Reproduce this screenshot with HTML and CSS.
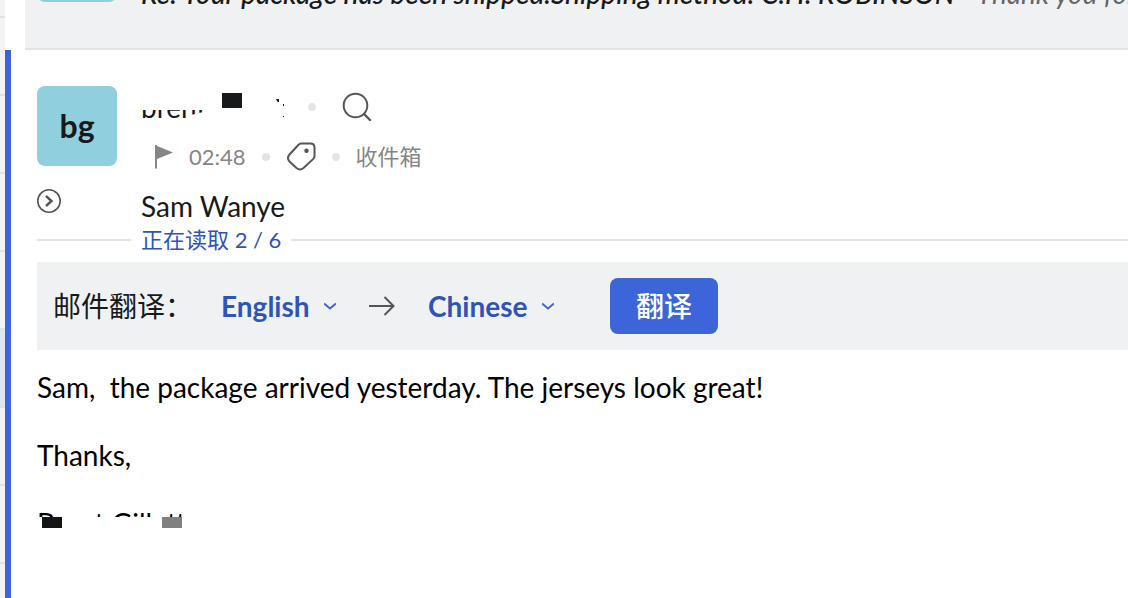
FILE: index.html
```html
<!DOCTYPE html>
<html lang="zh-CN">
<head>
  <meta charset="UTF-8">
  <meta name="viewport" content="width=device-width, initial-scale=1.0">
  <title>Mail</title>
  <link rel="stylesheet" href="styles.css">
</head>
<body>
  <div class="app">
    <aside class="mail-list">
      <div class="mail-row"></div>
      <div class="mail-row"></div>
      <div class="mail-row"></div>
      <div class="mail-row"></div>
      <div class="mail-row"></div>
      <div class="mail-row selected"></div>
      <div class="mail-row"></div>
      <div class="mail-row"></div>
      <div class="mail-row"></div>
    </aside>
    <main class="thread">
      <section class="collapsed">
        <div class="avatar"></div>
        <p class="preview">Re: Your package has been shipped.Shipping method: C.H. ROBINSON <span>- Thank you for</span></p>
      </section>

      <article class="message">
        <header class="message-header">
          <div class="avatar">bg</div>
          <div class="details">
            <div class="sender-row">
              <div class="sender">
                <span>brent gillette</span>
                <svg class="cover" width="164" height="40" viewBox="0 0 164 40">
                  <path fill="#fff" d="M0 0H164V40H46V30L62 26V24H0Z"/>
                  <rect x="81" y="7" width="20" height="15" fill="#18191a"/>
                  <path fill="#18191a" d="M135 13h3v3h-1l-1-1zM142 18h1v2h-1zM142 30h1v1h-1z"/>
                </svg>
              </div>
              <i class="dot"></i>
              <button class="icon-button search" aria-label="搜索">
                <svg width="30" height="30" viewBox="0 0 30 30" fill="none" stroke="#55555c" stroke-width="2">
                  <circle cx="13.500" cy="13.500" r="11.800"/>
                  <path d="M22 22l6 6" stroke-width="2.400" stroke-linecap="round"/>
                </svg>
              </button>
            </div>
            <div class="meta-row">
              <svg width="20" height="26" viewBox="0 0 20 26" fill="#868686">
                <path d="M2 1h2v1l16 6.500L4 15v9.500H2z"/>
              </svg>
              <time>02:48</time>
              <i class="dot"></i>
              <button class="icon-button" aria-label="标签">
                <svg width="30" height="30" viewBox="0 0 30 30" fill="none" stroke="#55555c" stroke-width="2">
                  <path d="M15 1.500h9.500q4 0 4 4V14q0 1.700-1.200 2.900L17.500 26q-3.500 3-7 0L3.500 19.500q-3-3.500 0-7L12.500 2.800q1.100-1.300 2.500-1.300z"/>
                  <circle cx="20.500" cy="8.700" r="2.200" fill="#55555c" stroke="none"/>
                </svg>
              </button>
              <i class="dot"></i>
              <span>收件箱</span>
            </div>
          </div>
        </header>

        <div class="recipient-row">
          <button class="icon-button expand" aria-label="展开">
            <svg width="24" height="24" viewBox="0 0 24 24" fill="none" stroke="#555">
              <circle cx="12" cy="12" r="11.200" stroke-width="1.600"/>
              <path d="M9 7l5.500 5L9 17" stroke-width="2.400"/>
            </svg>
          </button>
          <span>Sam Wanye</span>
        </div>

        <div class="read-status">
          <span>正在读取 2 / 6</span>
        </div>

        <form class="translate">
          <span class="translate-label">邮件翻译：</span>
          <div class="language">
            <select aria-label="源语言">
              <option>English</option>
            </select>
            <svg width="12" height="8" viewBox="0 0 12 8"><path d="M0 1.500l6 5 6-5"/></svg>
          </div>
          <svg class="arrow" width="26" height="20" viewBox="0 0 26 20">
            <path d="M0 10h24M15.500 1l9 9-9 9"/>
          </svg>
          <div class="language">
            <select aria-label="目标语言">
              <option>Chinese</option>
            </select>
            <svg width="12" height="8" viewBox="0 0 12 8"><path d="M0 1.500l6 5 6-5"/></svg>
          </div>
          <button class="translate-button" type="button">翻译</button>
        </form>

        <div class="content">
          <p>Sam,&nbsp; the package arrived yesterday. The jerseys look great!</p>
          <p>Thanks,</p>
          <p class="signature">
            <span>Brent Gillette</span>
            <svg class="cover" width="170" height="34" viewBox="0 0 170 34">
              <path fill="#fff" d="M0 11H170V34H0z"/>
              <rect x="5" y="11" width="20" height="11" fill="#151515"/>
              <rect x="125" y="11" width="20" height="11" fill="#808080"/>
            </svg>
          </p>
        </div>
      </article>
    </main>
  </div>
</body>
</html>
```
FILE: styles.css
```css
* {
  box-sizing: border-box;
}
body {
  margin: 0;
  background-color: white;
  color: #18191a;
  font-family: Lato, "Noto Sans CJK SC", sans-serif;
  font-size: 28px;
  line-height: 34px;
}
p {
  margin: 0;
}
.app {
  display: flex;
  height: 100vh;
  overflow: hidden;
}
.mail-list {
  flex: none;
  width: 5px;
  margin-top: -60px;
}
.mail-row {
  height: 78px;
  background-color: #f3f3f3;
  border-bottom: 2px solid #e2e2e2;
}
.mail-row.selected {
  background-color: #dfe5f3;
}
.thread {
  flex: 1;
  min-width: 0;
}
.collapsed {
  display: flex;
  align-items: flex-end;
  gap: 24px;
  margin: -78px 0 0 20px;
  padding: 0 0 46px 12px;
  background-color: #f0f1f3;
  border-bottom: 2px solid #e4e4e4;
}
.preview {
  flex: 1;
  min-width: 0;
  margin-bottom: -8px;
  overflow: hidden;
  white-space: nowrap;
  font-style: italic;
  font-weight: 500;
}
.preview span {
  color: #666;
  font-weight: 400;
}
.avatar {
  flex: none;
  width: 80px;
  height: 80px;
  border-radius: 8px;
  background-color: #90cfdd;
  font-size: 32px;
  font-weight: bold;
  line-height: 80px;
  text-align: center;
}
.message {
  min-height: 100vh;
  padding: 36px 0 0 26px;
  border-left: 6px solid #3b65d8;
}
.message-header {
  display: flex;
  gap: 24px;
}
.sender-row {
  display: flex;
  align-items: center;
  height: 42px;
}
.sender {
  position: relative;
  width: 151px;
  margin-right: 16px;
  white-space: nowrap;
}
.cover {
  position: absolute;
  left: 0;
  top: 0;
}
.sender .cover {
  top: -4px;
}
.search {
  margin-left: 26px;
}
.dot {
  width: 8px;
  height: 8px;
  border-radius: 50%;
  background-color: #e4e4e4;
}
.icon-button {
  display: flex;
  padding: 0;
  border: none;
  background: none;
  cursor: pointer;
}
.meta-row {
  display: flex;
  align-items: center;
  gap: 16px;
  margin-top: 12px;
  padding-left: 12px;
  color: #868686;
  font-size: 22px;
}
.recipient-row {
  display: flex;
  align-items: flex-start;
  gap: 80px;
  margin-top: 15px;
}
.read-status {
  display: flex;
  align-items: center;
  gap: 10px;
  margin-top: 5px;
  color: #2f54b5;
  font-size: 22px;
  line-height: 24px;
}
.read-status::before,
.read-status::after {
  content: "";
  width: 94px;
  height: 2px;
  background-color: #e4e4e4;
}
.read-status::after {
  flex: 1;
}
.translate {
  display: flex;
  align-items: center;
  margin-top: 10px;
  padding: 16px;
  background-color: #f0f1f3;
}
.translate-label {
  margin-right: 28px;
}
.language {
  position: relative;
}
.language select {
  appearance: none;
  display: block;
  margin: 0;
  padding: 0 26px 0 0;
  border: none;
  background: none;
  color: #2f54b5;
  font: inherit;
  font-weight: bold;
  cursor: pointer;
}
.language svg {
  position: absolute;
  right: 0;
  top: 13px;
  fill: none;
  stroke: #3b65d8;
  stroke-width: 2;
  pointer-events: none;
}
.arrow {
  margin: 0 33px;
  fill: none;
  stroke: #555;
  stroke-width: 2;
}
.translate-button {
  height: 56px;
  margin-left: 56px;
  padding: 0 26px;
  border: none;
  border-radius: 8px;
  background-color: #3b65d8;
  color: white;
  font: inherit;
  font-weight: 500;
  cursor: pointer;
}
.content {
  margin-top: 20px;
  color: black;
}
.content p {
  margin-bottom: 34px;
}
.signature {
  position: relative;
}
```
